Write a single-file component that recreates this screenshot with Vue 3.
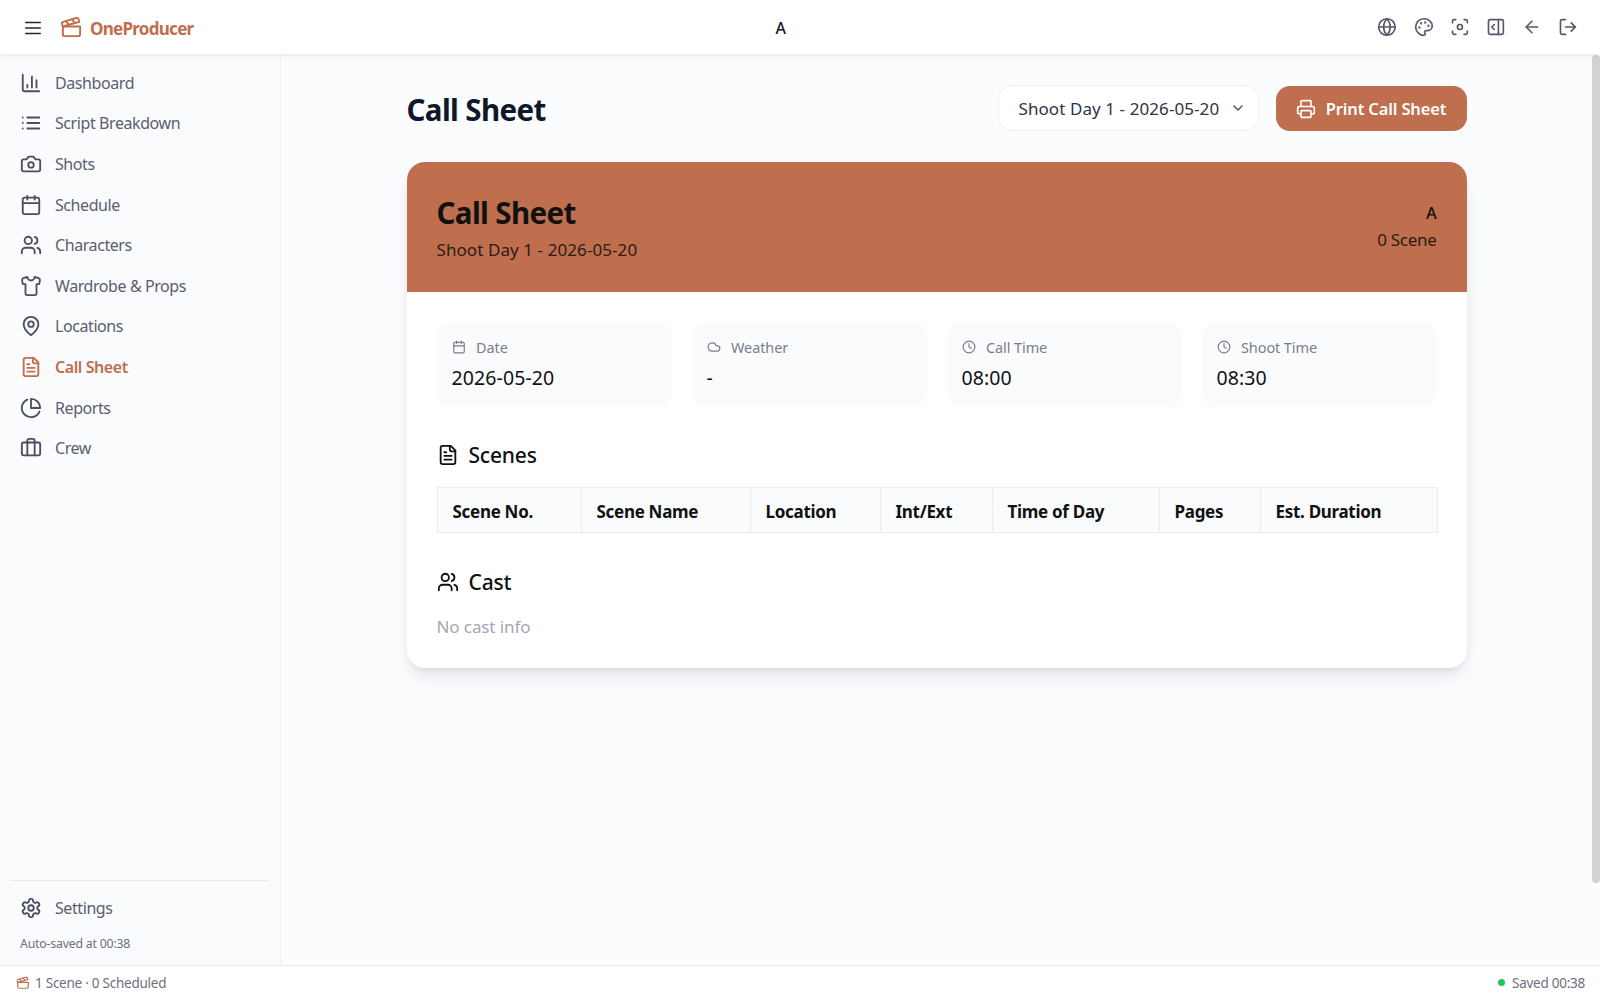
<script setup>
import { h } from 'vue'

const c = (cx, cy, r, fill) => ['circle', { cx, cy, r, ...(fill ? { fill: 'currentColor' } : {}) }]
const r = (x, y, width, height, rx) => ['rect', { x, y, width, height, rx }]

const ICONS = {
  menu: ['M4 6h16', 'M4 12h16', 'M4 18h16'],
  clapper: ['M20.2 6 3 11l-.9-2.4c-.3-1.1.3-2.2 1.3-2.5l13.5-4c1.1-.3 2.2.3 2.5 1.3Z', 'm6.2 5.3 3.1 3.9', 'm12.4 3.4 3.1 4', 'M3 11h18v8a2 2 0 0 1-2 2H5a2 2 0 0 1-2-2Z'],
  chart: ['M3 3v16a2 2 0 0 0 2 2h16', 'M18 17V9', 'M13 17V5', 'M8 17v-3'],
  list: ['M3 12h.01', 'M3 18h.01', 'M3 6h.01', 'M8 12h13', 'M8 18h13', 'M8 6h13'],
  camera: ['M14.5 4h-5L7 7H4a2 2 0 0 0-2 2v9a2 2 0 0 0 2 2h16a2 2 0 0 0 2-2V9a2 2 0 0 0-2-2h-3l-2.5-3z', c(12, 13, 3)],
  calendar: ['M8 2v4', 'M16 2v4', r(3, 4, 18, 18, 2), 'M3 10h18'],
  users: ['M16 21v-2a4 4 0 0 0-4-4H6a4 4 0 0 0-4 4v2', c(9, 7, 4), 'M22 21v-2a4 4 0 0 0-3-3.87', 'M16 3.13a4 4 0 0 1 0 7.75'],
  shirt: ['M20.38 3.46 16 2a4 4 0 0 1-8 0L3.62 3.46a2 2 0 0 0-1.34 2.23l.58 3.47a1 1 0 0 0 .99.84H6v10c0 1.1.9 2 2 2h8a2 2 0 0 0 2-2V10h2.15a1 1 0 0 0 .99-.84l.58-3.47a2 2 0 0 0-1.34-2.23z'],
  pin: ['M20 10c0 6-8 12-8 12s-8-6-8-12a8 8 0 0 1 16 0Z', c(12, 10, 3)],
  file: ['M15 2H6a2 2 0 0 0-2 2v16a2 2 0 0 0 2 2h12a2 2 0 0 0 2-2V7Z', 'M14 2v4a2 2 0 0 0 2 2h4', 'M10 9H8', 'M16 13H8', 'M16 17H8'],
  pie: ['M21.21 15.89A10 10 0 1 1 8 2.83', 'M22 12A10 10 0 0 0 12 2v10z'],
  case: [r(2, 6, 20, 14, 2), 'M16 20V4a2 2 0 0 0-2-2h-4a2 2 0 0 0-2 2v16'],
  gear: ['M12.22 2h-.44a2 2 0 0 0-2 2v.18a2 2 0 0 1-1 1.73l-.43.25a2 2 0 0 1-2 0l-.15-.08a2 2 0 0 0-2.73.73l-.22.38a2 2 0 0 0 .73 2.73l.15.1a2 2 0 0 1 1 1.72v.51a2 2 0 0 1-1 1.74l-.15.09a2 2 0 0 0-.73 2.73l.22.38a2 2 0 0 0 2.73.73l.15-.08a2 2 0 0 1 2 0l.43.25a2 2 0 0 1 1 1.73V20a2 2 0 0 0 2 2h.44a2 2 0 0 0 2-2v-.18a2 2 0 0 1 1-1.73l.43-.25a2 2 0 0 1 2 0l.15.08a2 2 0 0 0 2.73-.73l.22-.39a2 2 0 0 0-.73-2.73l-.15-.08a2 2 0 0 1-1-1.74v-.5a2 2 0 0 1 1-1.74l.15-.09a2 2 0 0 0 .73-2.73l-.22-.38a2 2 0 0 0-2.73-.73l-.15.08a2 2 0 0 1-2 0l-.43-.25a2 2 0 0 1-1-1.73V4a2 2 0 0 0-2-2z', c(12, 12, 3)],
  globe: [c(12, 12, 10), 'M12 2a14.5 14.5 0 0 0 0 20 14.5 14.5 0 0 0 0-20', 'M2 12h20'],
  palette: [c(13.5, 6.5, 0.5, true), c(17.5, 10.5, 0.5, true), c(8.5, 7.5, 0.5, true), c(6.5, 12.5, 0.5, true), 'M12 2C6.5 2 2 6.5 2 12s4.5 10 10 10c.926 0 1.648-.746 1.648-1.688 0-.437-.18-.835-.437-1.125-.29-.289-.438-.652-.438-1.125a1.64 1.64 0 0 1 1.668-1.668h1.996c3.051 0 5.555-2.503 5.555-5.554C21.965 6.012 17.461 2 12 2z'],
  focus: [c(12, 12, 3), 'M3 7V5a2 2 0 0 1 2-2h2', 'M17 3h2a2 2 0 0 1 2 2v2', 'M21 17v2a2 2 0 0 1-2 2h-2', 'M7 21H5a2 2 0 0 1-2-2v-2'],
  panel: [r(3, 3, 18, 18, 2), 'M15 3v18', 'm10 15-3-3 3-3'],
  back: ['m12 19-7-7 7-7', 'M19 12H5'],
  logout: ['M9 21H5a2 2 0 0 1-2-2V5a2 2 0 0 1 2-2h4', 'm16 17 5-5-5-5', 'M21 12H9'],
  printer: ['M6 18H4a2 2 0 0 1-2-2v-5a2 2 0 0 1 2-2h16a2 2 0 0 1 2 2v5a2 2 0 0 1-2 2h-2', 'M6 9V3a1 1 0 0 1 1-1h10a1 1 0 0 1 1 1v6', r(6, 14, 12, 8, 1)],
  chevron: ['m6 9 6 6 6-6'],
  cloud: ['M17.5 19H9a7 7 0 1 1 6.71-9h1.79a4.5 4.5 0 1 1 0 9Z'],
  clock: [c(12, 12, 10), 'M12 6v6l4 2']
}

const Icon = (props) =>
  h(
    'svg',
    {
      viewBox: '0 0 24 24',
      width: props.size || 24,
      height: props.size || 24,
      fill: 'none',
      stroke: 'currentColor',
      'stroke-width': 2,
      'stroke-linecap': 'round',
      'stroke-linejoin': 'round'
    },
    ICONS[props.name].map((p) => (typeof p === 'string' ? h('path', { d: p }) : h(p[0], p[1])))
  )
Icon.props = ['name', 'size']

const nav = [
  { label: 'Dashboard', icon: 'chart' },
  { label: 'Script Breakdown', icon: 'list' },
  { label: 'Shots', icon: 'camera' },
  { label: 'Schedule', icon: 'calendar' },
  { label: 'Characters', icon: 'users' },
  { label: 'Wardrobe & Props', icon: 'shirt' },
  { label: 'Locations', icon: 'pin' },
  { label: 'Call Sheet', icon: 'file', active: true },
  { label: 'Reports', icon: 'pie' },
  { label: 'Crew', icon: 'case' }
]
const tools = ['globe', 'palette', 'focus', 'panel', 'back', 'logout']
const infos = [
  { label: 'Date', value: '2026-05-20', icon: 'calendar' },
  { label: 'Weather', value: '-', icon: 'cloud' },
  { label: 'Call Time', value: '08:00', icon: 'clock' },
  { label: 'Shoot Time', value: '08:30', icon: 'clock' }
]
const columns = [
  { label: 'Scene No.', width: 144 },
  { label: 'Scene Name', width: 169 },
  { label: 'Location', width: 130 },
  { label: 'Int/Ext', width: 112 },
  { label: 'Time of Day', width: 167 },
  { label: 'Pages', width: 101 },
  { label: 'Est. Duration', width: 177 }
]
</script>

<template>
  <div class="app">
    <header class="topbar">
      <div class="brand">
        <Icon class="burger" name="menu" :size="22" />
        <Icon class="logo" name="clapper" :size="23" />
        <span class="brand-name">OneProducer</span>
      </div>
      <div class="project">A</div>
      <div class="tools">
        <Icon v-for="t in tools" :key="t" :name="t" :size="20" />
      </div>
    </header>

    <div class="body">
      <aside class="sidebar">
        <nav class="nav">
          <a v-for="item in nav" :key="item.label" class="nav-item" :class="{ active: item.active }">
            <Icon :name="item.icon" :size="22" />
            <span>{{ item.label }}</span>
          </a>
        </nav>
        <div class="side-foot">
          <a class="nav-item">
            <Icon name="gear" :size="22" />
            <span>Settings</span>
          </a>
          <div class="autosave">Auto-saved at 00:38</div>
        </div>
      </aside>

      <main class="main">
        <div class="content">
          <div class="page-head">
            <h1>Call Sheet</h1>
            <div class="actions">
              <div class="select">
                <span>Shoot Day 1 - 2026-05-20</span>
                <Icon name="chevron" :size="16" />
              </div>
              <button class="print">
                <Icon name="printer" :size="20" />
                <span>Print Call Sheet</span>
              </button>
            </div>
          </div>

          <section class="sheet">
            <div class="band">
              <div>
                <h2>Call Sheet</h2>
                <p>Shoot Day 1 - 2026-05-20</p>
              </div>
              <div class="band-right">
                <strong>A</strong>
                <span>0 Scene</span>
              </div>
            </div>
            <div class="sheet-body">
              <div class="infos">
                <div v-for="i in infos" :key="i.label" class="info">
                  <div class="info-label">
                    <Icon :name="i.icon" :size="14" />
                    <span>{{ i.label }}</span>
                  </div>
                  <div class="info-value">{{ i.value }}</div>
                </div>
              </div>

              <h3 class="scenes-title"><Icon name="file" :size="22" /><span>Scenes</span></h3>
              <table class="table">
                <thead>
                  <tr>
                    <th v-for="col in columns" :key="col.label" :style="{ width: col.width + 'px' }">{{ col.label }}</th>
                  </tr>
                </thead>
              </table>

              <h3 class="cast-title"><Icon name="users" :size="22" /><span>Cast</span></h3>
              <p class="empty">No cast info</p>
            </div>
          </section>
        </div>
      </main>
      <div class="scroll-thumb"></div>
    </div>

    <footer class="status">
      <div class="status-left">
        <Icon name="clapper" :size="14" />
        <span>1 Scene · 0 Scheduled</span>
      </div>
      <div class="status-right">
        <i class="dot"></i>
        <span>Saved 00:38</span>
      </div>
    </footer>
  </div>
</template>

<style>
html, body { margin: 0; height: 100%; overflow: hidden; }
</style>

<style scoped>
.app {
  height: 1000px;
  display: flex;
  flex-direction: column;
  font-family: "Noto Sans", "Open Sans", sans-serif;
  color: #111827;
  background: #fff;
}
.topbar {
  height: 54px;
  flex: none;
  display: flex;
  align-items: center;
  justify-content: space-between;
  padding: 1px 22.5px 0 22px;
  box-sizing: border-box;
  background: #fff;
  box-shadow: 0 1px 6px rgba(17, 24, 39, 0.1);
  position: relative;
  z-index: 2;
}
.brand { display: flex; align-items: center; width: 300px; }
.burger { color: #23263a; stroke-width: 1.6; }
.logo { color: #bf6e4e; margin-left: 16px; }
.brand-name {
  margin-left: 7px;
  padding-top: 2px;
  font-size: 17px;
  font-weight: 700;
  color: #bf6e4e;
  letter-spacing: -0.72px;
}
.project { font-size: 16px; font-weight: 500; color: #111827; margin-right: 138px; }
.tools { display: flex; gap: 16.2px; color: #55586b; width: 200px; justify-content: flex-end; position: relative; top: -1px; }

.body { flex: 1; display: flex; min-height: 0; position: relative; }
.sidebar {
  width: 281px;
  flex: none;
  display: flex;
  flex-direction: column;
  justify-content: space-between;
  padding-top: 8.5px;
  box-sizing: border-box;
  background: #fafbfd;
  border-right: 1px solid #f0f1f4;
  box-shadow: 1px 0 4px rgba(17, 24, 39, 0.03);
}
.nav { display: flex; flex-direction: column; padding: 0 10px; }
.nav-item {
  height: 40.6px;
  display: flex;
  align-items: center;
  gap: 13px;
  padding-left: 10px;
  font-size: 16px;
  letter-spacing: -0.42px;
  color: #5b5e70;
}
.nav-item svg { color: #4b4e63; flex: none; }
.nav-item.active { color: #bf6e4e; font-weight: 600; }
.nav-item.active svg { color: #bf6e4e; }
.side-foot {
  margin: 0 11px 0 10px;
  border-top: 1px solid #e8eaee;
  padding-top: 7px;
  height: 77px;
  box-sizing: content-box;
}
.autosave {
  padding: 6px 0 0 10px;
  font-size: 12.3px;
  letter-spacing: -0.2px;
  color: #6b7080;
}

.main {
  flex: 1;
  min-width: 0;
  overflow: hidden;
  background: #fbfcfe;
  padding-right: 8px;
}
.content { width: 1060px; margin: 0 auto; padding-top: 31px; }
.page-head { display: flex; align-items: center; justify-content: space-between; height: 46px; margin-bottom: 31px; }
h1 { margin: 0; font-size: 29.5px; font-weight: 700; color: #0f172a; letter-spacing: -0.6px; position: relative; top: 1px; }
.actions { display: flex; align-items: center; gap: 17px; }
.select {
  width: 261px;
  height: 46px;
  box-sizing: border-box;
  display: flex;
  align-items: center;
  justify-content: space-between;
  padding: 0 12px 0 20px;
  background: #fff;
  border: 1px solid #eef0f4;
  border-radius: 14px;
  font-size: 17px;
  letter-spacing: 0.08px;
  color: #2f3344;
}
.select svg { color: #4b4e63; }
.print {
  width: 191px;
  height: 45px;
  display: flex;
  align-items: center;
  justify-content: center;
  gap: 10px;
  border: 0;
  border-radius: 14px;
  background: #bf6e4e;
  color: #fff;
  font: inherit;
  font-size: 16.5px;
  font-weight: 600;
  letter-spacing: -0.15px;
  padding: 1px 0 0;
}
.sheet {
  background: #fff;
  border-radius: 18px;
  overflow: hidden;
  box-shadow: 0 10px 18px -3px rgba(17, 24, 39, 0.1), 0 4px 8px -4px rgba(17, 24, 39, 0.1);
}
.band {
  height: 130px;
  box-sizing: border-box;
  padding: 30px 30px 0;
  display: flex;
  justify-content: space-between;
  background: #bf6e4e;
}
.band h2 { margin: 0; font-size: 29.5px; line-height: 42px; font-weight: 700; color: #111; letter-spacing: -0.6px; }
.band p { margin: 1px 0 0; font-size: 17px; line-height: 30px; color: #2b1c16; letter-spacing: 0.08px; }
.band-right {
  display: flex;
  flex-direction: column;
  align-items: flex-end;
  padding-top: 9px;
  font-size: 17px;
  line-height: 30px;
  letter-spacing: -0.3px;
  color: #2b1c16;
}
.band-right strong { font-weight: 500; font-size: 16.5px; line-height: 24px; color: #111; }
.sheet-body { padding: 30px 30px 26px; }
.infos { display: grid; grid-template-columns: repeat(4, 1fr); gap: 20px; }
.info {
  height: 85px;
  box-sizing: border-box;
  padding: 14.5px 15px;
  background: #fafbfc;
  border-radius: 14px;
}
.info-label {
  display: flex;
  align-items: center;
  gap: 10.5px;
  font-size: 14.5px;
  line-height: 20px;
  letter-spacing: -0.1px;
  color: #7a7e8c;
}
.info-value { margin-top: 8.5px; font-size: 19.5px; line-height: 26px; letter-spacing: 0.1px; color: #111; font-weight: 400; }
h3 {
  margin: 0;
  display: flex;
  align-items: center;
  gap: 10px;
  font-size: 21px;
  line-height: 30px;
  font-weight: 500;
  letter-spacing: -0.2px;
  color: #111;
}
.scenes-title { margin-top: 33px; }
.table { margin-top: 17px; width: 1000px; border-collapse: collapse; table-layout: fixed; }
.table th {
  height: 45px;
  padding: 2px 15px 0;
  box-sizing: border-box;
  background: #fafbfc;
  border: 1px solid #e9ebef;
  text-align: left;
  font-size: 17px;
  font-weight: 700;
  letter-spacing: -0.3px;
  color: #111;
}
.cast-title { margin-top: 34px; }
.empty { margin: 15px 0 0; font-size: 17px; line-height: 30px; letter-spacing: -0.1px; color: #a3a7b5; }

.scroll-thumb {
  position: absolute;
  top: 1px;
  right: 0;
  width: 8px;
  height: 828px;
  border-radius: 4px;
  background: #d2d2d2;
}

.status {
  height: 35px;
  flex: none;
  display: flex;
  align-items: center;
  justify-content: space-between;
  padding: 0 15px 1px 16px;
  box-sizing: border-box;
  background: #fff;
  border-top: 1px solid #e8eaee;
  font-size: 13.5px;
  letter-spacing: -0.25px;
  color: #6b7080;
}
.status-left { display: flex; align-items: center; gap: 5px; }
.status-left svg { color: #bf6e4e; }
.status-right { display: flex; align-items: center; gap: 7px; }
.dot { width: 7px; height: 7px; border-radius: 50%; background: #22c55e; }
</style>
